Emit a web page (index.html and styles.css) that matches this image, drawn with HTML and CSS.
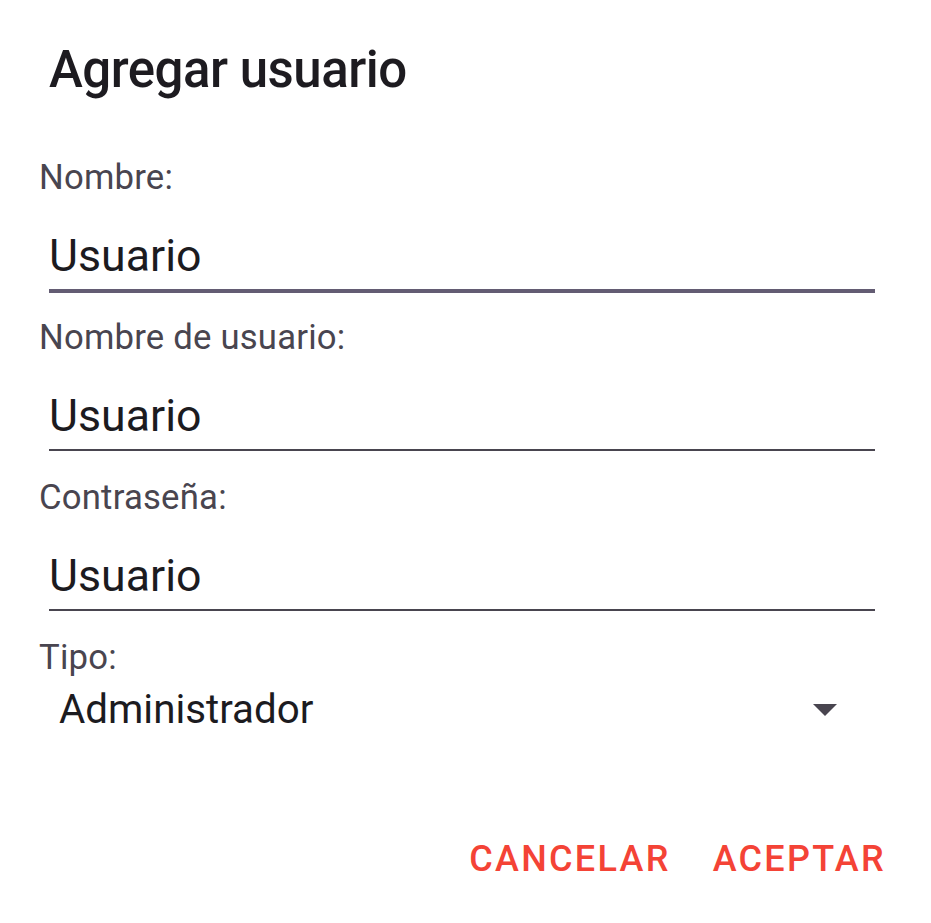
FILE: index.html
```html
<!DOCTYPE html>
<html lang="es">
<head>
<meta charset="utf-8">
<title>Agregar usuario</title>
<link rel="stylesheet" href="styles.css">
</head>
<body>
<div class="dialog">
  <h1 class="title">Agregar usuario</h1>

  <div class="field first">
    <div class="label">Nombre:</div>
    <div class="input focused"><span class="value">Usuario</span></div>
  </div>

  <div class="field">
    <div class="label">Nombre de usuario:</div>
    <div class="input"><span class="value">Usuario</span></div>
  </div>

  <div class="field">
    <div class="label">Contraseña:</div>
    <div class="input"><span class="value">Usuario</span></div>
  </div>

  <div class="field">
    <div class="label">Tipo:</div>
    <div class="spinner">
      <span class="spinner-value">Administrador</span>
      <svg class="arrow" width="24" height="12" viewBox="0 0 24 12" aria-hidden="true">
        <path d="M0 0 L24 0 L12 12 Z" fill="#49454f"/>
      </svg>
    </div>
  </div>

  <div class="actions">
    <span class="btn">CANCELAR</span>
    <span class="btn">ACEPTAR</span>
  </div>
</div>
</body>
</html>
```

FILE: styles.css
```css
html, body {
  margin: 0;
  padding: 0;
  background: #ffffff;
}

body {
  font-family: Roboto, "Noto Sans", "Liberation Sans", sans-serif;
  width: 931px;
  height: 923px;
  overflow: hidden;
}

.dialog {
  display: flex;
  flex-direction: column;
  padding: 40px 56px 0 38px;
}

.title {
  margin: 0 0 0 11px;
  font-size: 51px;
  line-height: 60px;
  font-weight: 500;
  letter-spacing: -0.5px;
  color: #1d1b20;
}

.field {
  display: flex;
  flex-direction: column;
  margin-top: 31px;
}

.field.first {
  margin-top: 62px;
}

.label {
  margin-left: 1px;
  font-size: 34.7px;
  line-height: 30px;
  letter-spacing: 0.2px;
  color: #49454f;
}

.input {
  margin-left: 11px;
  padding: 39px 0 8px 0;
  border-bottom: 2px solid #49454f;
}

.input.focused {
  border-bottom: 4px solid #635c73;
  margin-bottom: -2px;
}

.value {
  display: block;
  margin-left: 0;
  font-size: 44.7px;
  line-height: 50px;
  color: #1c1b1f;
}

.spinner {
  display: flex;
  align-items: center;
  justify-content: space-between;
  margin-top: 16px;
  padding: 0 38px 0 21px;
}

.spinner-value {
  font-size: 40.3px;
  line-height: 44px;
  color: #1c1b1f;
}

.arrow {
  display: block;
}

.actions {
  display: flex;
  justify-content: flex-end;
  gap: 42px;
  margin-top: 105px;
  margin-right: -11px;
}

.btn {
  font-size: 36px;
  line-height: 44px;
  font-weight: 500;
  letter-spacing: 2.3px;
  color: #f44336;
}
```
